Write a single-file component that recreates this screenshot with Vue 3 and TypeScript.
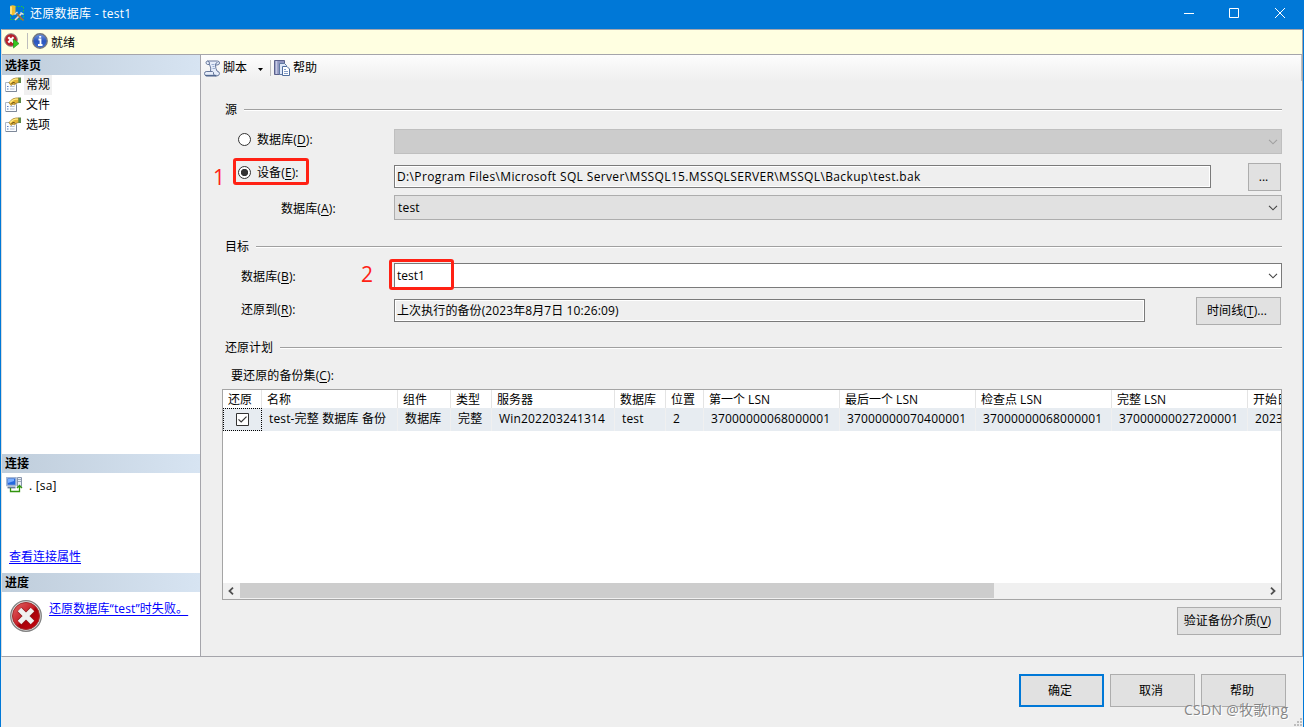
<script setup lang="ts">
interface Column { title: string; value: string; width: number }

const pages: string[] = ['常规', '文件', '选项']

const columns: Column[] = [
  { title: '还原', value: '', width: 39 },
  { title: '名称', value: 'test-完整 数据库 备份', width: 136 },
  { title: '组件', value: '数据库', width: 53 },
  { title: '类型', value: '完整', width: 41 },
  { title: '服务器', value: 'Win202203241314', width: 123 },
  { title: '数据库', value: 'test', width: 51 },
  { title: '位置', value: '2', width: 38 },
  { title: '第一个 LSN', value: '37000000068000001', width: 136 },
  { title: '最后一个 LSN', value: '37000000070400001', width: 136 },
  { title: '检查点 LSN', value: '37000000068000001', width: 136 },
  { title: '完整 LSN', value: '37000000027200001', width: 136 },
  { title: '开始日', value: '2023', width: 100 },
]
const template = columns.map((c) => `${c.width}px`).join(' ')
</script>

<template>
  <div class="window">
    <header class="titlebar">
      <svg class="app-icon" width="16" height="16" viewBox="0 0 16 16">
        <path d="M6 1.500H14.500V14.500H1.500V10" fill="none" stroke="#28c53c" stroke-dasharray="1.5 1.5" />
        <path d="M1 1Q3.500-.5 6.500 1V9L3.500 10.500L1 9Z" fill="#f2bd2f" />
        <path d="M2 1.500V9" stroke="#fff0a0" stroke-width="1.500" />
        <path d="M6 15L12.500 8.500" stroke="#66727c" stroke-width="2.400" />
        <path d="M6 15L12.500 8.500M5.500 9.500L8.500 7" stroke="#dce2e8" stroke-width="1.500" />
        <path d="M7.500 8.500L14.500 15.500" stroke="#a8703a" stroke-width="1.700" />
        <path d="M11.500 7.500L14.500 9.500" stroke="#dce2e8" stroke-width="1.500" />
      </svg>
      <span class="title">还原数据库 - test1</span>
      <div class="controls">
        <svg width="10" height="10" viewBox="0 0 10 10"><path d="M0 5.500H10" /></svg>
        <svg width="10" height="10" viewBox="0 0 10 10"><path d="M.5.5H9.500V9.500H.5Z" /></svg>
        <svg width="10" height="10" viewBox="0 0 10 10"><path d="M0 0L10 10M10 0L0 10" /></svg>
      </div>
    </header>

    <div class="client">
      <div class="status">
        <svg class="stop" width="16" height="16" viewBox="0 0 16 16">
          <circle cx="7" cy="7" r="6.300" fill="#b81f2b" stroke="#8a8a8a" />
          <path d="M4.300 4.300L9.500 9.500M9.500 4.300L4.300 9.500" stroke="#fff" stroke-width="2.200" />
          <path d="M9.500 6L15 10.500L9.500 15Z" fill="#35c522" stroke="#1f9c18" stroke-width=".7" />
        </svg>
        <i class="divider"></i>
        <svg width="16" height="16" viewBox="0 0 16 16">
          <defs><linearGradient id="info" x2="0" y2="1"><stop stop-color="#7397df" /><stop offset=".5" stop-color="#2a55bd" /><stop offset="1" stop-color="#3c6dd4" /></linearGradient></defs>
          <circle cx="8" cy="8" r="7.200" fill="url(#info)" stroke="#73777f" stroke-width="1.400" />
          <path d="M6.500 6.500H8.500V12M6 12H10.500M7.200 3.800H9.200" fill="none" stroke="#fff" stroke-width="1.800" />
        </svg>
        <span>就绪</span>
      </div>

      <div class="body">
        <aside class="sidebar">
          <h2>选择页</h2>
          <ul class="pages">
            <li v-for="(page, i) in pages" :key="page">
              <svg width="17" height="16" viewBox="0 0 17 16">
                <path d="M.5 5.500H11.500V14.500H.5Z" fill="#fbfdff" stroke="#a9b6c8" />
                <path d="M11.500 8V14.500H1" fill="none" stroke="#7d8899" />
                <path d="M2 9.500H3.500M2 12H3.500" stroke="#5c80c0" stroke-width="1.200" />
                <path d="M5 9.500H9.500M5 12H9.500" stroke="#b4c1d5" />
                <path d="M4 5.500L7.500 2L11 1H14V5.500L11.500 6L9.500 8L8 7L6 8.500Z" fill="#e3b437" stroke="#9a7622" stroke-width=".7" />
                <path d="M5 5.500L8 3L10.500 2.200H13" fill="none" stroke="#fff08c" stroke-width="1.300" />
                <path d="M6.500 7L8.500 5L10 6.500" fill="none" stroke="#4d3d16" />
                <path d="M13.500 .5H16V6H13.500Z" fill="#5f8a48" />
              </svg>
              <span :class="{ selected: i === 0 }">{{ page }}</span>
            </li>
          </ul>
          <h2>连接</h2>
          <div class="connection">
            <div class="server">
              <svg width="17" height="16" viewBox="0 0 17 16">
                <path d="M.8.800H10V8.500H.8Z" fill="#2468df" stroke="#a3b5d4" stroke-width="1.500" />
                <path d="M2 2H8V4L2 6Z" fill="#78adff" />
                <path d="M1.500 10.500H9.500" stroke="#687b9a" stroke-width="1.800" />
                <path d="M11.500.5H15.500V9.500H11.500Z" fill="#e8edf5" stroke="#8895ab" />
                <path d="M12 2.500H15M12 4.500H15" stroke="#8895ab" stroke-width=".8" />
                <path d="M4.500 11V14.500H13.500V9M11 11L13.500 8.500L16 11" fill="none" stroke="#32940e" stroke-width="1.300" />
              </svg>
              <span>. [sa]</span>
            </div>
            <a>查看连接属性</a>
          </div>
          <h2>进度</h2>
          <div class="progress">
            <svg width="32" height="32" viewBox="0 0 32 32">
              <defs><linearGradient id="fail" x2="1" y2="1"><stop stop-color="#e46767" /><stop offset=".48" stop-color="#c72028" /><stop offset=".55" stop-color="#a70009" /><stop offset="1" stop-color="#c90812" /></linearGradient></defs>
              <circle cx="16" cy="16" r="15.300" fill="#e1e1e1" stroke="#828282" stroke-width="1.300" />
              <circle cx="16" cy="16" r="13.500" fill="url(#fail)" stroke="#a22c2d" />
              <path d="M9.500 9.500L22.500 22.500M22.500 9.500L9.500 22.500" stroke="#8d1519" stroke-width="6.500" />
              <path d="M9.500 9.500L22.500 22.500M22.500 9.500L9.500 22.500" stroke="#f0f0f0" stroke-width="5" />
            </svg>
            <a>还原数据库“test”时失败。</a>
          </div>
        </aside>

        <main class="main">
          <div class="toolbar">
            <svg width="17" height="17" viewBox="0 0 17 17">
              <path d="M3.500 1H13.500Q15.500 1 15.500 3T13 5H11.500Q11.500 8.500 13 11Q15.500 11.500 15.500 13.700Q15 16 12.500 16H2.500Q.5 15.500 .5 13.500Q.5 11.500 2.500 11.500H6.500Q7.500 8 5.500 4.500H3.500Q2 4 2 2.700T3.500 1Z" fill="#e6edfa" stroke="#66779b" />
              <path d="M3.500 1Q6 1.500 5.500 4.500M2.500 11.500H8.500Q10 12 9.500 14Q10 15.500 12 16M11.500 5Q11.500 2.500 13.500 2.500" fill="none" stroke="#66779b" />
              <path d="M7.500 4.500H10.500M8.500 6.500H10.500M8.500 8.500H11" stroke="#9aadd0" />
              <path d="M1.500 15.500H12.500" stroke="#51688f" stroke-width="1.300" />
            </svg>
            <span>脚本</span>
            <svg class="drop" width="5" height="3" viewBox="0 0 5 3"><path d="M0 0H5L2.500 3Z" fill="#000" /></svg>
            <i class="divider"></i>
            <svg class="help-icon" width="16" height="16" viewBox="0 0 16 16">
              <path d="M.5.5H10.500V14.500H.5Z" fill="#9096c0" stroke="#5b618c" />
              <path d="M2.500 1V14" stroke="#c5cae4" stroke-width="1.500" />
              <path d="M5.500 3.500H10.500L12.500 5.500V14.500H5.500Z" fill="#dfe8f8" stroke="#607aa2" />
              <path d="M8.500 6.500H13L15.500 9V15.500H8.500Z" fill="#fff" stroke="#506e9d" />
              <path d="M10 9.500H12M10 11.500H14M10 13.500H14" stroke="#86a0c9" />
            </svg>
            <span class="help-text">帮助</span>
          </div>

          <section class="form">
            <div class="group first"><span>源</span><hr></div>
            <div class="row row-db">
              <label class="lab radio-label"><i class="radio"></i>数据库(<u>D</u>):</label>
              <div class="combo disabled"><svg width="10" height="6" viewBox="0 0 10 6"><path d="M1 .8L5 4.800L9 .8" /></svg></div>
            </div>
            <div class="row row-device">
              <label class="lab radio-label device"><i class="radio on"></i>设备(<u>E</u>):</label>
              <div class="field path"><span>D:\Program Files\Microsoft SQL Server\MSSQL15.MSSQLSERVER\MSSQL\Backup\test.bak</span></div>
              <button class="browse">...</button>
            </div>
            <div class="row row-source">
              <label class="lab nested">数据库(<u>A</u>):</label>
              <div class="combo">test<svg width="10" height="6" viewBox="0 0 10 6"><path d="M1 .8L5 4.800L9 .8" /></svg></div>
            </div>
            <div class="group target"><span>目标</span><hr></div>
            <div class="row row-target">
              <label class="lab low">数据库(<u>B</u>):</label>
              <div class="combo editable">test1<svg width="10" height="6" viewBox="0 0 10 6"><path d="M1 .8L5 4.800L9 .8" /></svg></div>
            </div>
            <div class="row row-time">
              <label class="lab high">还原到(<u>R</u>):</label>
              <div class="field time">上次执行的备份(2023年8月7日 10:26:09)</div>
              <button class="timeline">时间线(<u>T</u>)...</button>
            </div>
            <div class="group plan"><span>还原计划</span><hr></div>
            <label class="list-label">要还原的备份集(<u>C</u>):</label>
            <div class="list">
              <div class="list-head" :style="{ gridTemplateColumns: template }">
                <span v-for="c in columns" :key="c.title">{{ c.title }}</span>
              </div>
              <div class="list-row" :style="{ gridTemplateColumns: template }">
                <span v-for="(c, i) in columns" :key="c.title" :class="{ check: i === 0 }">
                  <svg v-if="i === 0" width="13" height="13" viewBox="0 0 13 13"><path d="M.5.5H12.500V12.500H.5Z" fill="#fff" stroke="#333" /><path d="M2.500 6.300L5.200 9L10.500 3.600" fill="none" stroke="#333" stroke-width="1.200" /></svg>
                  <template v-else>{{ c.value }}</template>
                </span>
              </div>
              <div class="scroll">
                <svg width="6" height="8" viewBox="0 0 6 8"><path d="M5 .7L1.500 4L5 7.300" /></svg>
                <i class="thumb"></i>
                <svg width="6" height="8" viewBox="0 0 6 8"><path d="M1 .7L4.500 4L1 7.300" /></svg>
              </div>
            </div>
            <button class="verify">验证备份介质(<u>V</u>)</button>
          </section>
        </main>
      </div>
    </div>

    <footer class="footer">
      <button class="primary">确定</button>
      <button>取消</button>
      <button>帮助</button>
    </footer>

    <i class="mark mark-device"></i>
    <i class="mark mark-target"></i>
    <span class="num num-one">1</span>
    <span class="num num-two">2</span>
    <span class="watermark">CSDN @牧歌ing</span>
    <svg class="grip" width="8" height="8" viewBox="0 0 8 8"><path d="M6 0h2v2h-2zM3 3h2v2h-2zM6 3h2v2h-2zM0 6h2v2h-2zM3 6h2v2h-2zM6 6h2v2h-2z" fill="#bdbdbd" /></svg>
  </div>
</template>

<style>
body { margin: 0; overflow: hidden; }
</style>

<style scoped>
* { box-sizing: border-box; }
.window { position: relative; width: 1304px; height: 727px; overflow: hidden; display: flex; flex-direction: column; background: #efefef; border: 1px solid #0078d7; border-width: 0 1px; color: #000; font: 12px/20px "Open Sans", "Noto Sans CJK SC", sans-serif; white-space: nowrap; }
svg { display: block; flex: none; }
u { text-underline-offset: 2px; }
.titlebar { height: 29px; flex: none; background: #0078d7; color: #fff; display: flex; align-items: center; padding: 0 18px 2px 8px; }
.app-icon { margin-top: -1px; }
.title { margin: 1px 0 0 5px; letter-spacing: .27px; }
.controls { display: flex; gap: 35px; margin: -1px 0 0 auto; padding-right: 1px; }
.controls svg { fill: none; stroke: #fff; stroke-width: 1; }
.controls svg:last-child { margin-left: 1px; margin-right: -1px; }
.client { height: 628px; flex: none; border: 1px solid #a5a5ab; border-left-color: #dcdcdc; display: flex; flex-direction: column; }
.status { height: 25px; flex: none; background: #ffffe1; border-bottom: 1px solid #a5a5ab; display: flex; align-items: center; padding: 0 2px 2px; }
.divider { width: 1px; height: 16px; background: #bdbdbd; }
.status .divider { margin: 0 4px 0 7px; }
.status span { margin: 3px 0 0 3px; }
.body { display: flex; flex: 1; min-height: 0; }
.sidebar { width: 199px; flex: none; background: #fff; border-right: 1px solid #a5a5ab; }
h2 { margin: 0; height: 19px; padding-left: 3px; font-size: 12px; line-height: 19px; font-weight: 600; background: linear-gradient(90deg, #bfcddb, #d7e4f2); }
.sidebar h2:first-child { height: 20px; line-height: 21px; }
.pages { margin: 0; padding: 0 0 0 3px; list-style: none; height: 379px; }
.pages li { display: flex; height: 20px; align-items: center; }
.pages span { padding: 0 2px; margin-left: 2px; line-height: 20px; height: 20px; }
.pages .selected { background: #f0f0f0; }
.connection { height: 100px; padding: 3px 4px 0; }
.server { display: flex; height: 20px; }
.server svg { margin-top: 1px; }
.server span { margin-left: 6px; letter-spacing: .2px; }
a { color: #00f; text-decoration: underline; text-underline-offset: 2px; }
.connection a { display: block; margin: 51px 0 0 3px; }
.progress { display: flex; padding: 8px; }
.progress a { margin: -1px 0 0 7px; letter-spacing: .12px; }
.main { flex: 1; min-width: 0; }
.toolbar { height: 26px; display: flex; align-items: center; padding-left: 3px; background: linear-gradient(#fdfdfd, #efefef); border-right: 1px solid #c2c2c2; }
.toolbar span { margin-left: 2px; }
.drop { margin: 2px 9px 0 11px; }
.toolbar .help-icon { margin-left: 3px; }
.toolbar .help-text { margin-left: 3px; }
.toolbar .divider { margin-left: -2px; }
.form { padding-left: 21px; }
.group { display: flex; align-items: center; height: 20px; width: 1060px; padding-left: 3px; }
.group hr { flex: 1; margin: 1px 0 0 7px; height: 2px; border: 0; background: linear-gradient(#a0a0a0 50%, #fff 50%); }
.group span { padding-top: 2px; }
.first { margin-top: 18px; }
.row { display: flex; align-items: center; }
.lab { width: 172px; flex: none; padding-left: 19px; letter-spacing: .12px; }
.low { padding-top: 2px; }
.high { padding-bottom: 2px; }
.radio-label { display: flex; align-items: center; padding: 0 0 3px 16px; }
.device { padding-bottom: 8px; }
.nested { padding: 2px 0 0 59px; }
.radio { width: 13px; height: 13px; border: 1px solid #333; border-radius: 50%; background: #fff; margin: -1px 6px 1px 0; }
.radio.on { background: radial-gradient(circle, #333 0 3.400px, #fff 3.900px); }
.combo { width: 888px; height: 25px; flex: none; border: 1px solid #adadad; background: #e1e1e1; display: flex; align-items: center; justify-content: space-between; padding: 0 3px; letter-spacing: .2px; }
.combo svg { fill: none; stroke: #444; stroke-width: 1.100; }
.disabled { background: #ccc; border-color: #bfbfbf; justify-content: flex-end; }
.disabled svg { stroke: #a0a0a0; }
.editable { background: #fff; border-color: #7a7a7a; padding-left: 2px; letter-spacing: 0; line-height: 18px; }
.field { height: 23px; flex: none; border: 1px solid #7a7a7a; box-shadow: inset 0 0 0 1px #fff; padding-left: 2px; line-height: 22px; margin-bottom: 1px; }
.path { width: 817px; letter-spacing: .365px; }
.time { width: 751px; letter-spacing: .1px; }
button { display: block; margin: 0; padding: 0; border: 1px solid #adadad; border-radius: 0; background: #e1e1e1; color: #000; font: inherit; height: 28px; }
.browse { width: 33px; margin-left: 37px; padding-right: 2px; }
.timeline { width: 85px; margin-left: 51px; padding-right: 3px; letter-spacing: .1px; }
.row-db { height: 35px; margin-top: 5px; }
.row-device { height: 36px; }
.row-source { height: 25px; }
.target { margin-top: 16px; }
.row-target { height: 25px; margin-top: 7px; }
.row-time { height: 28px; margin-top: 9px; }
.plan { margin-top: 12px; }
.list-label { display: block; margin: 9px 0 3px 9px; height: 20px; letter-spacing: .1px; }
.list { width: 1060px; height: 211px; border: 1px solid #a5a5a5; background: #fff; overflow: hidden; display: flex; flex-direction: column; }
.list-head, .list-row { display: grid; flex: none; }
.list-head { height: 18px; line-height: 19px; }
.list-head span { border-right: 1px solid #e4e4e4; padding-left: 5px; }
.list-row { height: 23px; line-height: 22px; background: #e7ecf1; letter-spacing: .15px; }
.list-row span { border-right: 1px solid #f0f0f0; padding-left: 7px; overflow: hidden; }
.list-row .check { display: flex; align-items: center; justify-content: center; padding: 0; border: 1px dotted #000; }
.scroll { margin-top: auto; height: 16px; background: #f0f0f0; border-bottom: 1px solid #f0f0f0; display: flex; align-items: center; padding: 0 5px 0 5px; }
.scroll svg { fill: none; stroke: #505050; stroke-width: 1.800; }
.thumb { width: 754px; height: 15px; background: #cdcdcd; margin: 0 auto 0 6px; }
.verify { width: 104px; margin: 7px 0 0 955px; padding-right: 3px; letter-spacing: .15px; }
.footer { display: flex; justify-content: flex-end; gap: 6px; padding: 17px 17px 0 0; }
.footer button { width: 85px; height: 33px; padding-right: 3px; }
.footer .primary { border: 2px solid #0078d7; }
.mark { position: absolute; border: 3px solid #ff2114; border-radius: 3px; }
.mark-device { left: 232px; top: 158px; width: 76px; height: 27px; }
.mark-target { left: 388px; top: 259px; width: 65px; height: 31px; }
.num { position: absolute; color: #ff2114; font-size: 21px; line-height: 24px; }
.num-one { left: 212px; top: 165px; }
.num-two { left: 360px; top: 262px; }
.watermark { position: absolute; left: 1183px; top: 700px; font: 14px/20px "Open Sans", "Noto Sans CJK SC", sans-serif; letter-spacing: .3px; color: #858585; text-shadow: 1px 1px 0 #fff; }
.grip { position: absolute; right: 1px; bottom: 1px; }
</style>
